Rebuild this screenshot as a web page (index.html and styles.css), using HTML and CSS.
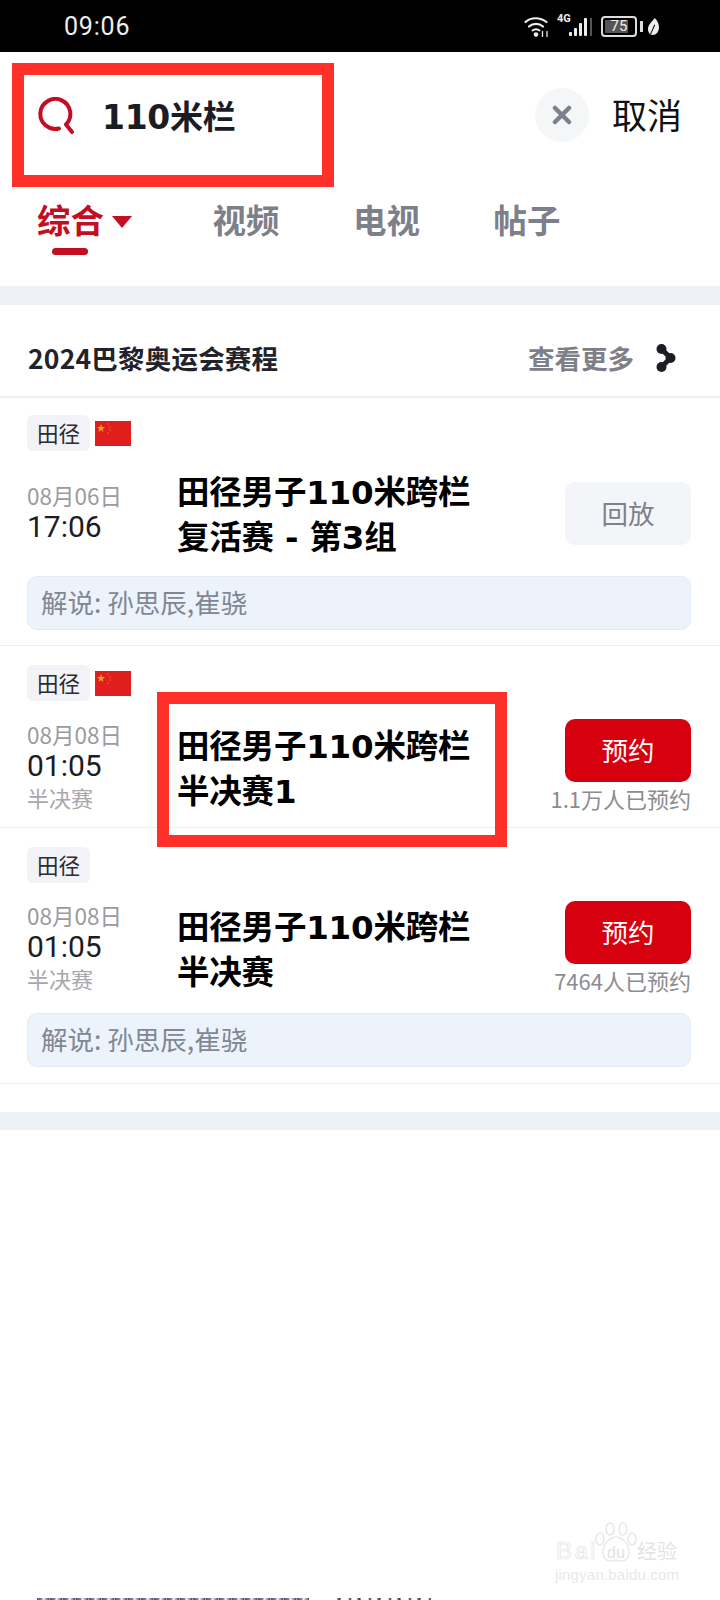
FILE: index.html
```html
<!DOCTYPE html>
<html>
<head lang="zh">
    <meta charset="UTF-8">
    <title>110米栏</title>
    <link rel="stylesheet" href="styles.css">
</head>
<body>
<div class="page">
    <div class="status">
        <span class="clock">09:06</span>
        <div class="status-icons">
            <svg class="wifi" width="25" height="21" viewBox="0 0 25 21" fill="none" stroke="#eee" stroke-linecap="round">
                <path d="M1.500 6C7 1 16 1 22.500 6" stroke-width="2.200"/>
                <path d="M5 10.500C9 7 15 7 19 10.500" stroke-width="2.200"/>
                <path d="M8.500 14.500C10.500 13 13.500 13 15.500 14.500" stroke-width="2"/>
                <circle cx="12" cy="18.500" r="2.300" fill="#eee" stroke="none"/>
                <path d="M18.500 15.500v5M23 15.500v5" stroke-width="1.300"/>
            </svg>
            <span class="net">4G</span>
            <svg class="bars" width="23" height="18" viewBox="0 0 23 18" fill="#eee">
                <rect x="0" y="14" width="3" height="4" rx="1"/>
                <rect x="5" y="10" width="3" height="8" rx="1"/>
                <rect x="10" y="5" width="3" height="13" rx="1"/>
                <rect x="15" y="0" width="3" height="18" rx="1"/>
                <rect x="21" y="0" width="2" height="18" fill="#555"/>
            </svg>
            <div class="battery"><span>75</span></div>
            <span class="battery-tip"></span>
            <svg class="leaf" width="11" height="17" viewBox="0 0 13 20">
                <path d="M8 0C12 4 13 8 13 11C13 16 10 20 6 20C2 20 0 17 0 13C0 8 5 4 8 0Z" fill="#eee"/>
                <path d="M3 19L8 8" stroke="#000" stroke-width="1.200"/>
            </svg>
        </div>
    </div>

    <div class="search">
        <svg class="search-icon" width="38" height="38" viewBox="0 0 38 38" fill="none" stroke="#c30d23" stroke-width="4" stroke-linecap="round" stroke-linejoin="round">
            <path d="M21 31.500A15 15 0 1 1 28 27.500L34 35"/>
        </svg>
        <span class="keyword">110米栏</span>
        <span class="clear">
            <svg width="20" height="20" viewBox="0 0 20 20" stroke="#7d818c" stroke-width="4.500" stroke-linecap="round">
                <path d="M3 3L17 17M17 3L3 17"/>
            </svg>
        </span>
        <span class="cancel">取消</span>
    </div>

    <div class="tabs">
        <div class="tab active">综合<i class="caret"></i></div>
        <div class="tab">视频</div>
        <div class="tab">电视</div>
        <div class="tab">帖子</div>
    </div>

    <div class="band"></div>

    <div class="sec-head">
        <span class="sec-title">2024巴黎奥运会赛程</span>
        <span class="more">查看更多</span>
        <svg class="more-icon" width="20" height="28" viewBox="0 0 20 28" fill="#1d1d26" stroke="#1d1d26" stroke-width="5" stroke-linecap="round">
            <circle cx="5.500" cy="5" r="5" stroke="none"/>
            <circle cx="14.500" cy="14" r="5" stroke="none"/>
            <circle cx="5.500" cy="23" r="5" stroke="none"/>
            <path d="M5.500 5L14.500 14L5.500 23" fill="none"/>
        </svg>
    </div>

    <div class="item item-one">
        <div class="tags">
            <span class="tag">田径</span>
            <svg class="flag" width="36" height="25" viewBox="0 0 36 25">
                <rect width="36" height="25" fill="#df1f1c"/>
                <path d="M6 3L7 6L10 6L7.600 7.900L8.500 11L6 9.100L3.500 11L4.400 7.900L2 6L5 6Z" fill="#f7a52c"/>
                <circle cx="13" cy="3" r="0.600" fill="#f0a030"/>
                <circle cx="15" cy="6" r="0.600" fill="#f0a030"/>
                <circle cx="15" cy="9" r="0.600" fill="#f0a030"/>
                <circle cx="13" cy="12" r="0.600" fill="#f0a030"/>
            </svg>
        </div>
        <div class="main main-one">
            <div class="when">
                <div class="date">08月06日</div>
                <div class="time">17:06</div>
            </div>
            <div class="title">田径男子110米跨栏<br>复活赛 - 第3组</div>
            <div class="action">
                <span class="btn btn-grey">回放</span>
            </div>
        </div>
        <div class="note">解说: 孙思辰,崔骁</div>
    </div>

    <div class="item item-two">
        <div class="tags">
            <span class="tag">田径</span>
            <svg class="flag" width="36" height="25" viewBox="0 0 36 25">
                <rect width="36" height="25" fill="#df1f1c"/>
                <path d="M6 3L7 6L10 6L7.600 7.900L8.500 11L6 9.100L3.500 11L4.400 7.900L2 6L5 6Z" fill="#f7a52c"/>
                <circle cx="13" cy="3" r="0.600" fill="#f0a030"/>
                <circle cx="15" cy="6" r="0.600" fill="#f0a030"/>
                <circle cx="15" cy="9" r="0.600" fill="#f0a030"/>
                <circle cx="13" cy="12" r="0.600" fill="#f0a030"/>
            </svg>
        </div>
        <div class="main">
            <div class="when">
                <div class="date">08月08日</div>
                <div class="time">01:05</div>
                <div class="round">半决赛</div>
            </div>
            <div class="title">田径男子110米跨栏<br>半决赛1</div>
            <div class="action">
                <span class="btn btn-red">预约</span>
                <span class="count">1.1万人已预约</span>
            </div>
        </div>
    </div>

    <div class="item item-three">
        <div class="tags">
            <span class="tag">田径</span>
        </div>
        <div class="main">
            <div class="when">
                <div class="date">08月08日</div>
                <div class="time">01:05</div>
                <div class="round">半决赛</div>
            </div>
            <div class="title">田径男子110米跨栏<br>半决赛</div>
            <div class="action">
                <span class="btn btn-red">预约</span>
                <span class="count">7464人已预约</span>
            </div>
        </div>
        <div class="note">解说: 孙思辰,崔骁</div>
    </div>

    <div class="band band-end"></div>

    <!-- 红框标注 -->
    <div class="mark mark-search"></div>
    <div class="mark mark-title"></div>

    <!-- 水印 -->
    <div class="wm">
        <svg class="wm-paw" width="42" height="42" viewBox="0 0 42 42" fill="#fff" stroke="#e8e8e8" stroke-width="1.500">
            <ellipse cx="5" cy="17" rx="4" ry="6"/>
            <ellipse cx="15" cy="7" rx="4" ry="6"/>
            <ellipse cx="28" cy="7" rx="4" ry="6"/>
            <ellipse cx="37" cy="17" rx="4" ry="6"/>
            <path d="M21 15C29 15 35 25 34 32C33 39 27 40 21 38C15 40 9 39 8 32C7 25 13 15 21 15Z"/>
        </svg>
        <span class="wm-bai">Bai</span>
        <span class="wm-du">du</span>
        <span class="wm-cn">经验</span>
        <span class="wm-url">jingyan.baidu.com</span>
    </div>

    <!-- 底部被截断的一行，只剩几个像素 -->
    <div class="cut-strip cut-a"></div>
    <div class="cut-strip cut-b"></div>
</div>
</body>
</html>
```

FILE: styles.css
```css
* {
    padding: 0;
    margin: 0;
    box-sizing: border-box;
}

body {
    background: #fff;
    font-family: "Noto Sans CJK SC", "Noto Sans", sans-serif;
}

.page {
    width: 720px;
    height: 1600px;
    overflow: hidden;
    position: relative;
    background: #fff;
}

/* 状态栏 */
.status {
    height: 52px;
    background: #000;
    color: #eee;
    display: flex;
    align-items: center;
    justify-content: space-between;
    padding: 0 61px 0 64px;
}

.clock {
    font-family: "Roboto", sans-serif;
    font-size: 25px;
    letter-spacing: 0.8px;
}

.status-icons {
    display: flex;
    align-items: center;
}

.net {
    font-family: "Roboto", sans-serif;
    font-size: 11px;
    font-weight: 700;
    line-height: 12px;
    margin: -14px 0 0 8px;
    width: 12px;
    white-space: nowrap;
}

.bars {
    margin-top: 2px;
}

.battery {
    width: 36px;
    height: 21px;
    margin-left: 9px;
    border: 2px solid #ddd;
    border-radius: 4px;
    padding: 2px;
}

.battery span {
    display: block;
    height: 13px;
    background: linear-gradient(90deg, #555 82%, transparent 82%);
    border-radius: 1px;
    font-family: "Roboto", sans-serif;
    font-size: 15px;
    line-height: 13px;
    text-align: center;
    color: #eee;
}

.battery-tip {
    width: 3px;
    height: 11px;
    background: #ddd;
    margin: 0 5px 0 3px;
}

/* 搜索栏 */
.search {
    height: 126px;
    display: flex;
    align-items: center;
    padding: 0 38px 4px 38px;
}

.search-icon {
    margin-top: 6px;
}

.keyword {
    font-family: "DejaVu Sans", "Noto Sans CJK SC", sans-serif;
    font-size: 33px;
    font-weight: 700;
    color: #1c1c24;
    margin: 4px 0 0 26px;
    flex: 1;
    letter-spacing: -0.3px;
}

.clear {
    width: 54px;
    height: 54px;
    margin-top: 4px;
    border-radius: 50%;
    background: #f5f6f8;
    display: flex;
    align-items: center;
    justify-content: center;
}

.cancel {
    font-size: 35px;
    color: #111;
    margin-left: 23px;
}

/* 标签页 */
.tabs {
    height: 108px;
    display: flex;
    padding-left: 37px;
}

.tab {
    position: relative;
    width: 140.5px;
    font-size: 33.5px;
    font-weight: 700;
    line-height: 40px;
    padding-top: 21px;
    color: #7e8089;
}

.tab.active {
    width: 175.5px;
    color: #c30d23;
}

.tab.active::after {
    content: "";
    position: absolute;
    left: 15px;
    top: 70px;
    width: 36px;
    height: 7px;
    border-radius: 4px;
    background: #c30d23;
}

.caret {
    display: inline-block;
    width: 0;
    height: 0;
    margin-left: 8px;
    border-left: 10px solid transparent;
    border-right: 10px solid transparent;
    border-top: 12px solid #c30d23;
    vertical-align: 5px;
}

.band {
    height: 19px;
    background: #eef1f5;
}

.band-end {
    height: 18px;
    margin-top: 28px;
}

/* 赛程 */
.sec-head {
    height: 93px;
    display: flex;
    align-items: center;
    padding: 14px 44px 0 28px;
    border-bottom: 2px solid #eeeeee;
}

.sec-title {
    flex: 1;
    font-size: 26.5px;
    font-weight: 700;
    letter-spacing: 0.2px;
    color: #22222a;
}

.more {
    font-size: 26.5px;
    font-weight: 700;
    color: #7e8089;
}

.more-icon {
    margin-left: 22px;
}

.item {
    padding: 17px 29px 0 27px;
    border-bottom: 1px solid #f0f0f2;
}

.item-one {
    height: 248px;
}

.item-two {
    height: 182px;
    padding-top: 19px;
}

.item-three {
    height: 256px;
    padding-top: 19px;
}

.tags {
    display: flex;
    align-items: center;
    height: 36px;
}

.tag {
    width: 63px;
    height: 36px;
    border-radius: 6px;
    background: #f1f3f7;
    color: #2b2b33;
    font-size: 21.5px;
    line-height: 35px;
    text-align: center;
}

.flag {
    margin-left: 5px;
}

.main {
    display: flex;
    margin-top: 18px;
    height: 114px;
}

.main-one {
    margin-top: 29px;
    height: 96px;
}

.item-three .main {
    margin-top: 17px;
}

.when {
    flex: none;
    width: 150px;
}

.date {
    font-size: 22.5px;
    line-height: 30px;
    color: #9a9a9f;
}

.time {
    font-family: "Roboto", "Noto Sans", sans-serif;
    font-size: 30px;
    line-height: 34px;
    color: #1c1c24;
}

.round {
    font-size: 22px;
    line-height: 28px;
    color: #a8a8ad;
}

.title {
    flex: none;
    width: 387px;
    font-family: "DejaVu Sans", "Noto Sans CJK SC", sans-serif;
    font-size: 32.5px;
    font-weight: 700;
    line-height: 44.5px;
    color: #000;
    margin-top: 6px;
    letter-spacing: -0.2px;
}

.main-one .title {
    margin-top: -9px;
}

.action {
    flex: 1;
    min-width: 0;
    display: flex;
    flex-direction: column;
    align-items: flex-end;
}

.main-one .action {
    margin-top: 2px;
}

.item-three .action {
    margin-top: 1px;
}

.btn {
    flex: none;
    width: 126px;
    height: 63px;
    border-radius: 10px;
    font-size: 26.5px;
    line-height: 62px;
    text-align: center;
}

.btn-grey {
    background: #f4f5f9;
    color: #808088;
}

.btn-red {
    background: #d6000f;
    color: #fff;
}

.count {
    font-size: 22px;
    line-height: 33px;
    color: #8c8c91;
    white-space: nowrap;
}

.note {
    height: 54px;
    padding-left: 13px;
    background: #edf3fb;
    border: 1px solid #e4ebf5;
    border-radius: 10px;
    font-size: 26.5px;
    line-height: 50px;
    color: #7f8893;
}

.item-three .note {
    margin-top: -1px;
}

/* 红框标注 */
.mark {
    position: absolute;
    border: 12px solid #ff3029;
}

.mark-search {
    left: 12px;
    top: 63px;
    width: 322px;
    height: 124px;
}

.mark-title {
    left: 157px;
    top: 692px;
    width: 350px;
    height: 155px;
}

/* 水印 */
.wm {
    position: absolute;
    left: 552px;
    top: 1522px;
    width: 130px;
    height: 62px;
}

.wm-paw {
    position: absolute;
    left: 43px;
    top: 0;
}

.wm-bai,
.wm-du,
.wm-cn,
.wm-url {
    position: absolute;
    white-space: nowrap;
    color: #e8e8e8;
    font-family: "Liberation Sans", sans-serif;
}

.wm-bai {
    left: 4px;
    top: 15px;
    font-size: 24px;
    line-height: 28px;
    letter-spacing: 2.5px;
    color: #fff;
    -webkit-text-stroke: 0.7px #e4e4e4;
}

.wm-du {
    left: 55px;
    top: 22px;
    font-size: 16px;
    line-height: 18px;
    color: #e2e2e2;
}

.wm-cn {
    left: 85px;
    top: 16px;
    font-family: "Noto Sans CJK SC", sans-serif;
    font-size: 20px;
    line-height: 26px;
    color: #e4e4e4;
}

.wm-url {
    left: 3px;
    top: 44px;
    font-size: 15px;
    line-height: 18px;
    letter-spacing: 0.2px;
}

.cut-strip {
    position: absolute;
    top: 1598px;
    height: 2px;
}

.cut-a {
    left: 37px;
    width: 272px;
    background: repeating-linear-gradient(90deg, #55506e 0, #8a86b0 5px, #fff 6px, #c8c4e0 8px, #4a4660 12px, #fff 13px);
}

.cut-b {
    left: 337px;
    width: 94px;
    background: repeating-linear-gradient(90deg, #aaa 0, #222 3px, #fff 4px, #fff 11px, #333 13px, #fff 15px, #fff 20px);
}
```
